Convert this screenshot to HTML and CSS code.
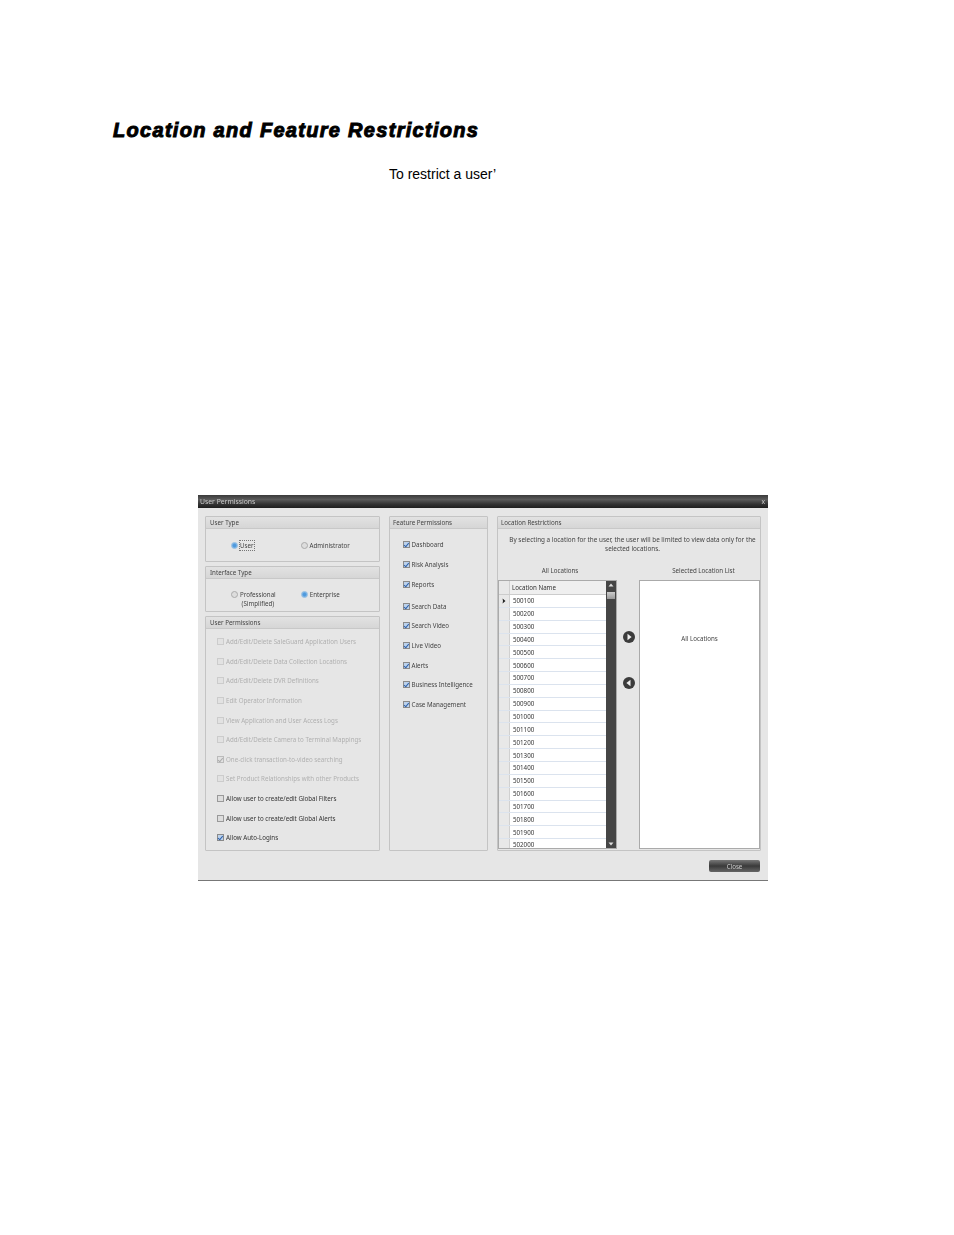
FILE: index.html
```html
<!DOCTYPE html>
<html>
  <head>
    <meta charset="utf-8" />
    <title>Location and Feature Restrictions</title>
    <link rel="stylesheet" href="styles.css">
  </head>
  <body>
    <h1 class="page-title">Location and Feature Restrictions</h1>
    <p class="intro">To restrict a user’</p>

    <div class="dialog">
      <div class="title-bar">
        <span>User Permissions</span>
        <span class="title-close">x</span>
      </div>

      <div class="dialog-body">
        <div class="col-left">
          <div class="panel type-panel">
            <div class="panel-head">User Type</div>
            <div class="radio-row user-type">
              <label class="radio on user-radio"><i></i><span class="focus">User</span></label>
              <label class="radio admin-radio"><i></i><span>Administrator</span></label>
            </div>
          </div>

          <div class="panel type-panel">
            <div class="panel-head">Interface Type</div>
            <div class="radio-row interface-type">
              <label class="radio pro-radio"><i></i><span>Professional<br />(Simplified)</span></label>
              <label class="radio on ent-radio"><i></i><span>Enterprise</span></label>
            </div>
          </div>

          <div class="panel perms-panel">
            <div class="panel-head">User Permissions</div>
            <ul class="perm-list">
              <li class="off"><i class="check"></i>Add/Edit/Delete SaleGuard Application Users</li>
              <li class="off"><i class="check"></i>Add/Edit/Delete Data Collection Locations</li>
              <li class="off"><i class="check"></i>Add/Edit/Delete DVR Definitions</li>
              <li class="off"><i class="check"></i>Edit Operator Information</li>
              <li class="off"><i class="check"></i>View Application and User Access Logs</li>
              <li class="off"><i class="check"></i>Add/Edit/Delete Camera to Terminal Mappings</li>
              <li class="off"><i class="check checked"></i>One-click transaction-to-video searching</li>
              <li class="off"><i class="check"></i>Set Product Relationships with other Products</li>
              <li><i class="check"></i>Allow user to create/edit Global Filters</li>
              <li><i class="check"></i>Allow user to create/edit Global Alerts</li>
              <li><i class="check checked"></i>Allow Auto-Logins</li>
            </ul>
          </div>
        </div>

        <div class="panel feature-panel">
          <div class="panel-head">Feature Permissions</div>
          <ul class="feature-list">
            <li><i class="check checked"></i>Dashboard</li>
            <li><i class="check checked"></i>Risk Analysis</li>
            <li><i class="check checked"></i>Reports</li>
            <li class="gap"><i class="check checked"></i>Search Data</li>
            <li><i class="check checked"></i>Search Video</li>
            <li><i class="check checked"></i>Live Video</li>
            <li><i class="check checked"></i>Alerts</li>
            <li><i class="check checked"></i>Business Intelligence</li>
            <li><i class="check checked"></i>Case Management</li>
          </ul>
        </div>

        <div class="panel location-panel">
          <div class="panel-head">Location Restrictions</div>
          <p class="location-note">By selecting a location for the user, the user will be limited to view data only for the selected locations.</p>
          <div class="list-heads">
            <span class="head-all">All Locations</span>
            <span class="head-selected">Selected Location List</span>
          </div>
          <div class="lists">
            <div class="grid">
              <div class="grid-table">
                <div class="grid-row grid-header"><b></b><span>Location Name</span></div>
                <div class="grid-row"><b class="current">
                  <svg viewBox="0 0 6 6"><path d="M1.5 0.5 L4.5 3 L1.5 5.5 L2 3 Z" fill="#222" /></svg>
                </b><span>500100</span></div>
                <div class="grid-row"><b></b><span>500200</span></div>
                <div class="grid-row"><b></b><span>500300</span></div>
                <div class="grid-row"><b></b><span>500400</span></div>
                <div class="grid-row"><b></b><span>500500</span></div>
                <div class="grid-row"><b></b><span>500600</span></div>
                <div class="grid-row"><b></b><span>500700</span></div>
                <div class="grid-row"><b></b><span>500800</span></div>
                <div class="grid-row"><b></b><span>500900</span></div>
                <div class="grid-row"><b></b><span>501000</span></div>
                <div class="grid-row"><b></b><span>501100</span></div>
                <div class="grid-row"><b></b><span>501200</span></div>
                <div class="grid-row"><b></b><span>501300</span></div>
                <div class="grid-row"><b></b><span>501400</span></div>
                <div class="grid-row"><b></b><span>501500</span></div>
                <div class="grid-row"><b></b><span>501600</span></div>
                <div class="grid-row"><b></b><span>501700</span></div>
                <div class="grid-row"><b></b><span>501800</span></div>
                <div class="grid-row"><b></b><span>501900</span></div>
                <div class="grid-row"><b></b><span>502000</span></div>
              </div>
              <div class="scrollbar">
                <svg class="scroll-arrow" viewBox="0 0 10 8"><path d="M2.5 5.5 L5 2.5 L7.5 5.5 Z" fill="#ddd" /></svg>
                <div class="scroll-thumb"></div>
                <svg class="scroll-arrow scroll-down" viewBox="0 0 10 8"><path d="M2.5 2.5 L5 5.5 L7.5 2.5 Z" fill="#ddd" /></svg>
              </div>
            </div>

            <div class="move-buttons">
              <svg viewBox="0 0 12 12"><circle cx="6" cy="6" r="6" fill="#3c3c3c" /><path d="M4.5 2.8 L8.6 6 L4.5 9.2 Z" fill="#f0f0f0" /></svg>
              <svg viewBox="0 0 12 12"><circle cx="6" cy="6" r="6" fill="#3c3c3c" /><path d="M7.5 2.8 L3.4 6 L7.5 9.2 Z" fill="#f0f0f0" /></svg>
            </div>

            <div class="selected-list">All Locations</div>
          </div>
        </div>
      </div>

      <div class="dialog-foot">
        <button class="close-btn">Close</button>
      </div>
    </div>
  </body>
</html>
```

FILE: styles.css
```css
* {
  margin: 0;
  padding: 0;
  box-sizing: border-box;
}

body {
  background: #fff;
  font-family: "Liberation Sans", Arial, sans-serif;
  color: #000;
  padding-top: 118px;
  height: 1235px;
  overflow: hidden;
}

.page-title {
  margin-left: 113px;
  font-size: 20px;
  line-height: 24px;
  font-weight: 700;
  font-style: italic;
  letter-spacing: 1.3px;
  -webkit-text-stroke: 1px #000;
}

.intro {
  margin: 24px 0 0 389px;
  font-size: 14px;
  line-height: 16px;
}

/* dialog */
.dialog {
  width: 570px;
  height: 386px;
  margin: 313px 0 0 198px;
  background: #e6e6e6;
  border-bottom: 1px solid #777;
  font-family: "Noto Sans", Tahoma, sans-serif;
  font-size: 6.2px;
  color: #444;
  filter: blur(0.3px);
}

.title-bar {
  height: 13px;
  padding: 0 3px 0 2px;
  display: flex;
  justify-content: space-between;
  align-items: center;
  background: linear-gradient(180deg, #3a3a3a 0%, #5a5a5a 35%, #333 70%, #1e1e1e 100%);
  color: #ccc;
  font-size: 6.8px;
}

.dialog-body {
  display: flex;
  gap: 9px;
  padding: 8px 0 0 7px;
  height: 343px;
}

.col-left {
  width: 175px;
  display: flex;
  flex-direction: column;
  gap: 4px;
}

.panel {
  border: 1px solid #c4c4c4;
  border-radius: 1px;
  background: #e6e6e6;
}

.panel-head {
  height: 12px;
  line-height: 12px;
  padding-left: 3px;
  background: linear-gradient(180deg, #e2e2e2, #d6d6d6);
  border-bottom: 1px solid #c8c8c8;
  color: #444;
  font-size: 6.2px;
}

.col-left .panel-head {
  padding-left: 4px;
}

.type-panel {
  height: 46px;
}

.radio-row {
  display: flex;
  height: 33px;
}

.radio {
  display: flex;
  align-items: flex-start;
  gap: 2px;
  line-height: 9px;
  color: #444;
}

.radio span {
  text-align: center;
}

.radio i {
  width: 7px;
  height: 7px;
  flex: none;
  margin-top: 1px;
  border-radius: 50%;
  border: 1px solid #aaa;
  background: #ddd;
}

.radio.on i {
  border-color: #8fbce2;
  background: radial-gradient(circle, #4f9ade 35%, #a6cbea 100%);
}

.focus {
  outline: 1px dotted #777;
  outline-offset: 0;
}

.user-radio {
  margin: 12px 0 0 25px;
}

.admin-radio {
  margin: 12px 0 0 47px;
}

.pro-radio {
  margin: 11px 0 0 25px;
}

.ent-radio {
  margin: 11px 0 0 25px;
}

.perms-panel {
  height: 236px;
}

.perm-list,
.feature-list {
  list-style: none;
}

.perm-list {
  padding: 3px 0 0 11px;
}

.perm-list li {
  height: 19.6px;
  display: flex;
  align-items: center;
  gap: 2px;
  color: #333;
}

.perm-list li.off {
  color: #b0b0b0;
}

.check {
  position: relative;
  width: 7px;
  height: 7px;
  flex: none;
  border: 1px solid #999;
  background: #ddd;
}

.off .check {
  border-color: #ccc;
  background: #e2e2e2;
}

.check.checked {
  background: #bcd2ec;
  border-color: #8a8a8a;
}

.check.checked::after {
  content: "";
  position: absolute;
  left: 1px;
  top: 0;
  width: 2px;
  height: 3.5px;
  border: solid #2c5fa8;
  border-width: 0 1px 1px 0;
  transform: rotate(40deg);
}

.off .check.checked {
  background: #e2e2e2;
  border-color: #bbb;
}

.off .check.checked::after {
  border-color: #aaa;
}

.feature-panel {
  width: 99px;
  height: 335px;
}

.feature-list {
  padding: 6px 0 0 13px;
}

.feature-list li {
  height: 19.7px;
  display: flex;
  align-items: center;
  gap: 1.5px;
  color: #444;
}

.feature-list li.gap {
  margin-top: 2.2px;
}

.location-panel {
  width: 264px;
  height: 335px;
}

.location-note {
  padding: 7px 3px 0 10px;
  text-align: center;
  line-height: 8.5px;
  font-size: 6.35px;
}

.list-heads {
  display: flex;
  margin-top: 13px;
  line-height: 9px;
}

.head-all {
  width: 124px;
  text-align: center;
}

.head-selected {
  flex: 1;
  padding-left: 25px;
  text-align: center;
}

.lists {
  display: flex;
  margin-top: 5px;
}

.grid {
  width: 119px;
  height: 269px;
  display: flex;
  border: 1px solid #aaa;
}

.grid-table {
  width: 108px;
  overflow: hidden;
  background: #fff;
}

.grid-row {
  height: 12.85px;
  display: flex;
  align-items: center;
  border-bottom: 1px solid #dbe3ee;
  color: #333;
}

.grid-header {
  height: 14px;
  background: #efefef;
  border-bottom: 1px solid #ccc;
}

.grid-row b {
  width: 11px;
  height: 100%;
  flex: none;
  display: flex;
  align-items: center;
  justify-content: center;
  background: #e8e8e8;
  border-right: 1px solid #d0d0d0;
}

.grid-row b svg {
  width: 6px;
  height: 6px;
}

.grid-row span {
  padding-left: 3px;
}

.grid-header span {
  padding-left: 2px;
}

.scrollbar {
  width: 10px;
  display: flex;
  flex-direction: column;
  background: #454545;
}

.scroll-arrow {
  width: 10px;
  height: 8px;
  flex: none;
}

.scroll-thumb {
  width: 8px;
  height: 7px;
  margin: 3px 0 0 1px;
  background: linear-gradient(180deg, #ccc, #999);
}

.scroll-down {
  margin-top: auto;
}

.move-buttons {
  width: 22px;
  padding: 51px 0 0 6px;
  display: flex;
  flex-direction: column;
  gap: 34px;
}

.move-buttons svg {
  width: 12px;
  height: 12px;
}

.selected-list {
  width: 121px;
  height: 269px;
  background: #fff;
  border: 1px solid #aaa;
  padding: 53px 0 0 0;
  text-align: center;
  color: #444;
}

.dialog-foot {
  display: flex;
  justify-content: flex-end;
  padding: 9px 8px 0 0;
}

.close-btn {
  width: 51px;
  height: 12px;
  border: 0;
  border-radius: 2px;
  background: linear-gradient(180deg, #777, #3a3a3a 50%, #666);
  color: #ccc;
  font: 6.2px "Noto Sans", Tahoma, sans-serif;
}
```
